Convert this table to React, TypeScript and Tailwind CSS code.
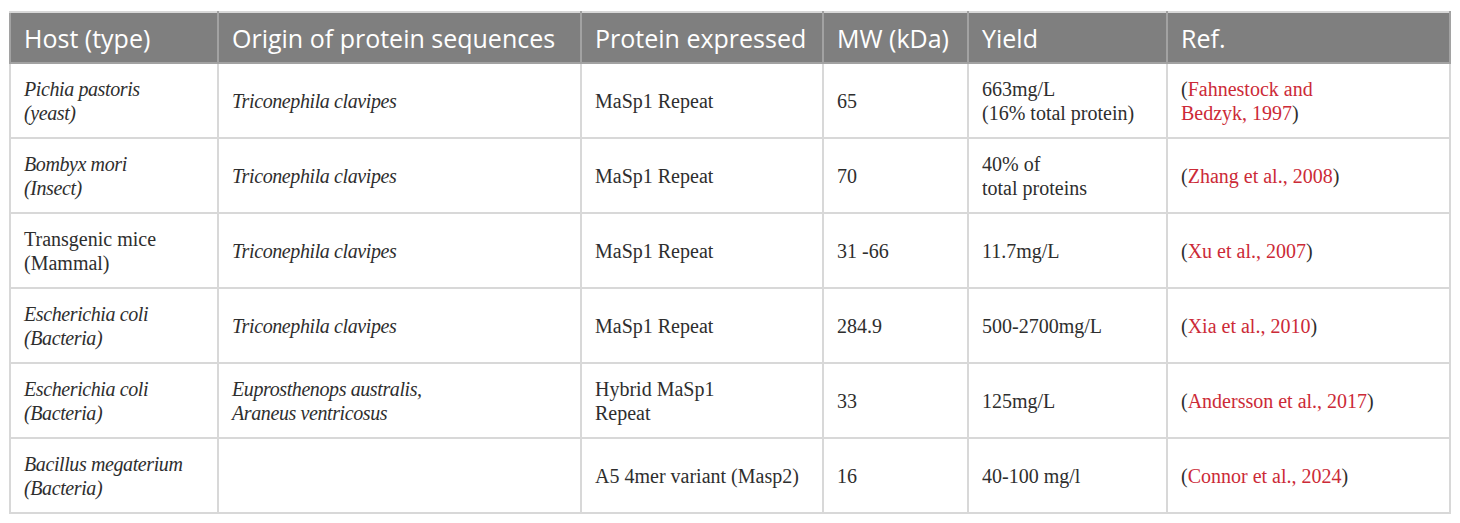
import React from 'react'

type Row = {
  host: React.ReactNode
  origin: React.ReactNode
  protein: React.ReactNode
  mw: string
  yieldText: React.ReactNode
  ref: React.ReactNode
}

function Cite({ children }: { children: React.ReactNode }) {
  return (
    <span>
      (<span className="text-[#cc2a37]">{children}</span>)
    </span>
  )
}

// species names: italic, a bit tighter like the journal's italic face
function Sp({ children }: { children: React.ReactNode }) {
  return <i className="tracking-[-0.4px]">{children}</i>
}

const rows: Row[] = [
  {
    host: <Sp>Pichia pastoris<br />(yeast)</Sp>,
    origin: <Sp>Triconephila clavipes</Sp>,
    protein: 'MaSp1 Repeat',
    mw: '65',
    yieldText: <>663mg/L<br />(16% total protein)</>,
    ref: (
      <>
        (<span className="text-[#cc2a37]">Fahnestock and<br />Bedzyk, 1997</span>)
      </>
    ),
  },
  {
    host: <Sp>Bombyx mori<br />(Insect)</Sp>,
    origin: <Sp>Triconephila clavipes</Sp>,
    protein: 'MaSp1 Repeat',
    mw: '70',
    yieldText: <>40% of<br />total proteins</>,
    ref: <Cite>Zhang et al., 2008</Cite>,
  },
  {
    host: <>Transgenic mice<br />(Mammal)</>,
    origin: <Sp>Triconephila clavipes</Sp>,
    protein: 'MaSp1 Repeat',
    mw: '31 -66',
    yieldText: '11.7mg/L',
    ref: <Cite>Xu et al., 2007</Cite>,
  },
  {
    host: <Sp>Escherichia coli<br />(Bacteria)</Sp>,
    origin: <Sp>Triconephila clavipes</Sp>,
    protein: 'MaSp1 Repeat',
    mw: '284.9',
    yieldText: '500-2700mg/L',
    ref: <Cite>Xia et al., 2010</Cite>,
  },
  {
    host: <Sp>Escherichia coli<br />(Bacteria)</Sp>,
    origin: <Sp>Euprosthenops australis,<br />Araneus ventricosus</Sp>,
    protein: <>Hybrid MaSp1<br />Repeat</>,
    mw: '33',
    yieldText: '125mg/L',
    ref: <Cite>Andersson et al., 2017</Cite>,
  },
  {
    host: <Sp>Bacillus megaterium<br />(Bacteria)</Sp>,
    origin: '',
    protein: 'A5 4mer variant (Masp2)',
    mw: '16',
    yieldText: '40-100 mg/l',
    ref: <Cite>Connor et al., 2024</Cite>,
  },
]

const headers = ['Host (type)', 'Origin of protein sequences', 'Protein expressed', 'MW (kDa)', 'Yield', 'Ref.']

export default function App() {
  return (
    <div className="w-[1460px] h-[523px] bg-white pl-[9px] pt-[11px]">
      <table className="w-[1440px] table-fixed border-collapse border-2 border-[#d8d8d8]">
        <colgroup>
          <col className="w-[208px]" />
          <col className="w-[363px]" />
          <col className="w-[242px]" />
          <col className="w-[145px]" />
          <col className="w-[199px]" />
          <col className="w-[283px]" />
        </colgroup>
        <thead>
          <tr className="h-[51px] bg-[#7f7f7f]">
            {headers.map((h) => (
              <th
                key={h}
                className="border-2 border-[#a2a2a2] border-t-[#d8d8d8] px-[13px] text-left align-middle font-normal text-white text-[25px] leading-[30px] whitespace-nowrap font-['Open_Sans',sans-serif]"
              >
                {h}
              </th>
            ))}
          </tr>
        </thead>
        <tbody className="text-[#2e2e2e] text-[20px] leading-[24px] font-['Liberation_Serif',serif]">
          {rows.map((r, i) => (
            <tr key={i} className="h-[75px]">
              {[r.host, r.origin, r.protein, r.mw, r.yieldText, r.ref].map((c, j) => (
                <td key={j} className="border-2 border-[#d8d8d8] px-[13px] align-middle">
                  {c}
                </td>
              ))}
            </tr>
          ))}
        </tbody>
      </table>
    </div>
  )
}
